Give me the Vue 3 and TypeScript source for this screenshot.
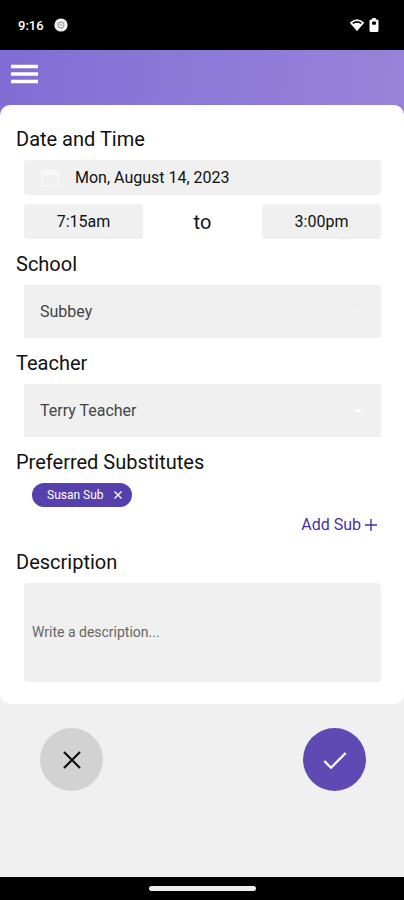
<script setup lang="ts">
import { ref } from 'vue'

const schools: string[] = ['Subbey']
const teachers: string[] = ['Terry Teacher']

const date = ref<string>('Mon, August 14, 2023')
const startTime = ref<string>('7:15am')
const endTime = ref<string>('3:00pm')
const school = ref<string>(schools[0])
const teacher = ref<string>(teachers[0])
const substitutes = ref<string[]>(['Susan Sub'])
const description = ref<string>('')

function removeSubstitute(name: string): void {
  substitutes.value = substitutes.value.filter((s) => s !== name)
}
</script>

<template>
  <div class="screen">
    <div class="status-bar">
      <div class="status-group">
        <span class="clock">9:16</span>
        <svg class="notification" viewBox="0 0 14 14" aria-hidden="true">
          <circle cx="7" cy="7" r="6.6" fill="#f4f4f4" />
          <circle cx="7" cy="7" r="3" fill="none" stroke="#8c8c8c" stroke-width="1" />
          <path d="M7 4h5M4.400 8.500 2 4.300M9.600 8.500 7.200 12.800" stroke="#c0c0c0" stroke-width=".8" />
          <circle cx="7" cy="7" r="1.500" fill="#c4c4c4" />
        </svg>
      </div>
      <div class="status-group status-right">
        <svg class="wifi" viewBox="0 0 16 14" aria-hidden="true">
          <path d="M1.300 4.700Q8-1 14.700 4.700L8 12.600Z" fill="#fff" stroke="#fff" stroke-width="1" stroke-linejoin="round" />
          <path d="M3.200 4.800Q8 1.400 12.800 4.800L11.800 6.100Q8 3.600 4.200 6.100Z" fill="#000" />
        </svg>
        <svg class="battery" viewBox="0 0 10 14" aria-hidden="true">
          <path d="M3.200 0h3.600v1.500H8A1.500 1.500 0 0 1 9.500 3v9.500A1.500 1.500 0 0 1 8 14H2a1.500 1.500 0 0 1-1.500-1.500V3A1.500 1.500 0 0 1 2 1.500h1.200Z" fill="#fff" />
          <rect x="3" y="3.600" width="4" height="3.200" rx="1" fill="#000" />
        </svg>
      </div>
    </div>

    <header class="app-bar">
      <button class="menu" type="button" aria-label="Menu">
        <svg viewBox="0 0 28 20" aria-hidden="true">
          <path d="M1 2.500h27M1 10h27M1 17.500h27" stroke="#fff" stroke-width="3.400" />
        </svg>
      </button>
    </header>

    <main class="content">
      <form id="request" class="card" @submit.prevent>
        <section class="group">
          <h2 id="when">Date and Time</h2>
          <div class="fields" role="group" aria-labelledby="when">
            <button class="picker date" type="button">
              <svg viewBox="0 0 20 20" aria-hidden="true">
                <path d="M2 3.500h16v14.500H2Z" fill="none" stroke="#f8f8f8" stroke-width="1.500" stroke-linejoin="round" />
                <path d="M2 3h16v4H2ZM5 1h2v3H5ZM13 1h2v3h-2Z" fill="#f8f8f8" />
              </svg>
              <span>{{ date }}</span>
            </button>
            <div class="times">
              <button class="picker time" type="button">{{ startTime }}</button>
              <span class="to">to</span>
              <button class="picker time" type="button">{{ endTime }}</button>
            </div>
          </div>
        </section>

        <section class="group">
          <h2><label for="school">School</label></h2>
          <div class="fields select-box">
            <select id="school" v-model="school">
              <option v-for="s in schools" :key="s">{{ s }}</option>
            </select>
            <svg class="caret faint" viewBox="0 0 12 6" aria-hidden="true"><path d="M1 1h10L6 5Z" /></svg>
          </div>
        </section>

        <section class="group">
          <h2><label for="teacher">Teacher</label></h2>
          <div class="fields select-box">
            <select id="teacher" v-model="teacher">
              <option v-for="t in teachers" :key="t">{{ t }}</option>
            </select>
            <svg class="caret" viewBox="0 0 12 6" aria-hidden="true"><path d="M1 1h10L6 5Z" /></svg>
          </div>
        </section>

        <section class="group">
          <h2>Preferred Substitutes</h2>
          <div class="fields subs">
            <div class="chips">
              <span v-for="name in substitutes" :key="name" class="chip">
                {{ name }}
                <button type="button" :aria-label="`Remove ${name}`" @click="removeSubstitute(name)">
                  <svg viewBox="0 0 10 10" aria-hidden="true">
                    <path d="m1.500 1.500 7 7m0-7-7 7" stroke="#fff" stroke-width="1.300" />
                  </svg>
                </button>
              </span>
            </div>
            <button class="add" type="button">
              Add Sub
              <svg viewBox="0 0 12 12" aria-hidden="true">
                <path d="M6 0v12M0 6h12" stroke="currentColor" stroke-width="1.400" />
              </svg>
            </button>
          </div>
        </section>

        <section class="group">
          <h2><label for="description">Description</label></h2>
          <div class="fields">
            <textarea id="description" v-model="description" placeholder="Write a description..."></textarea>
          </div>
        </section>
      </form>

      <div class="actions">
        <button class="round cancel" type="button" aria-label="Cancel">
          <svg viewBox="0 0 24 24" aria-hidden="true">
            <path d="m4 4 16 16m0-16L4 20" stroke="#111" stroke-width="2.200" />
          </svg>
        </button>
        <button class="round confirm" type="submit" form="request" aria-label="Confirm">
          <svg viewBox="0 0 24 24" aria-hidden="true">
            <path d="m1.300 13 6.700 6.700L22.700 5" fill="none" stroke="#fff" stroke-width="2.300" />
          </svg>
        </button>
      </div>
    </main>

    <div class="nav-bar"><span class="handle"></span></div>
  </div>
</template>

<style>
body {
  margin: 0;
  background: #f0f0f0;
}
</style>

<style scoped>
.screen {
  display: flex;
  flex-direction: column;
  min-height: 100vh;
  font-family: Roboto, "Liberation Sans", sans-serif;
  font-size: 16px;
  color: #111;
  background: linear-gradient(100deg, #7f6dd5 0, #8b79d8 45%, #9983da 100%) 0 50px / 100% 75px no-repeat #f0f0f0;
}

button,
select,
textarea {
  margin: 0;
  padding: 0;
  border: 0;
  font: inherit;
  color: inherit;
  background: none;
}

button {
  cursor: pointer;
}

svg {
  display: block;
  flex: none;
}

.status-bar {
  display: flex;
  align-items: center;
  justify-content: space-between;
  height: 50px;
  padding: 0 25px 0 18px;
  background: #000;
}

.status-group {
  display: flex;
  align-items: center;
  gap: 10px;
}

.status-right {
  gap: 4px;
}

.clock {
  font-size: 13px;
  font-weight: 500;
  color: #fff;
}

.notification {
  width: 14px;
  height: 14px;
}

.wifi {
  width: 16px;
  height: 14px;
}

.battery {
  width: 10px;
  height: 14px;
}

.app-bar {
  display: flex;
  align-items: center;
  height: 55px;
  padding: 0 10px;
}

.menu {
  padding: 4px 0 11px;
}

.menu svg {
  width: 28px;
  height: 20px;
}

.content {
  flex: 1;
}

.card {
  display: flex;
  flex-direction: column;
  gap: 13px;
  padding: 22px 16px;
  border-radius: 10px;
  background: #fff;
}

.group {
  display: flex;
  flex-direction: column;
  gap: 9px;
}

h2 {
  margin: 0;
  font-size: 20px;
  font-weight: 400;
  line-height: 24px;
}

.fields {
  display: flex;
  flex-direction: column;
  gap: 9px;
  margin: 0 7px 0 8px;
}

.picker {
  height: 35px;
  border-radius: 4px;
  background: #f0f0f0;
}

.date {
  display: flex;
  align-items: center;
  gap: 15px;
  padding: 0 16px;
}

.date svg {
  width: 20px;
  height: 20px;
}

.times {
  display: grid;
  grid-template-columns: repeat(3, 1fr);
  align-items: center;
  text-align: center;
}

.to {
  font-size: 20px;
}

.select-box {
  position: relative;
}

select {
  height: 53px;
  padding: 0 16px;
  appearance: none;
  color: #444;
  background: #f0f0f0;
}

.caret {
  position: absolute;
  top: 24px;
  right: 17px;
  width: 12px;
  height: 6px;
  fill: #fff;
  pointer-events: none;
}

.faint {
  fill: #f2f2f2;
}

.chips {
  display: flex;
  flex-wrap: wrap;
  gap: 8px;
  padding: 0 8px;
}

.chip {
  display: flex;
  align-items: center;
  gap: 9px;
  height: 24px;
  padding: 0 9px 0 15px;
  border-radius: 12px;
  font-size: 12px;
  color: #fff;
  background: #5640ae;
}

.chip svg {
  width: 10px;
  height: 10px;
}

.add {
  display: flex;
  align-items: center;
  align-self: flex-end;
  gap: 4px;
  margin: 0 4px 3px;
  line-height: 18px;
  color: #4a2fa5;
}

.add svg {
  width: 12px;
  height: 12px;
}

textarea {
  box-sizing: border-box;
  height: 99px;
  padding: 39px 8px 8px;
  border-radius: 4px;
  font-size: 14px;
  line-height: 20px;
  resize: none;
  background: #f0f0f0;
}

textarea::placeholder {
  color: #666;
}

.actions {
  display: flex;
  justify-content: space-between;
  padding: 24px 38px 24px 40px;
}

.round {
  display: grid;
  place-items: center;
  width: 63px;
  height: 63px;
  border-radius: 50%;
}

.round svg {
  width: 24px;
  height: 24px;
}

.cancel {
  background: #d2d2d2;
}

.confirm {
  background: #5f49b2;
}

.nav-bar {
  display: grid;
  place-items: center;
  height: 23px;
  background: #000;
}

.handle {
  width: 107px;
  height: 5px;
  border-radius: 3px;
  background: #eee;
}
</style>
